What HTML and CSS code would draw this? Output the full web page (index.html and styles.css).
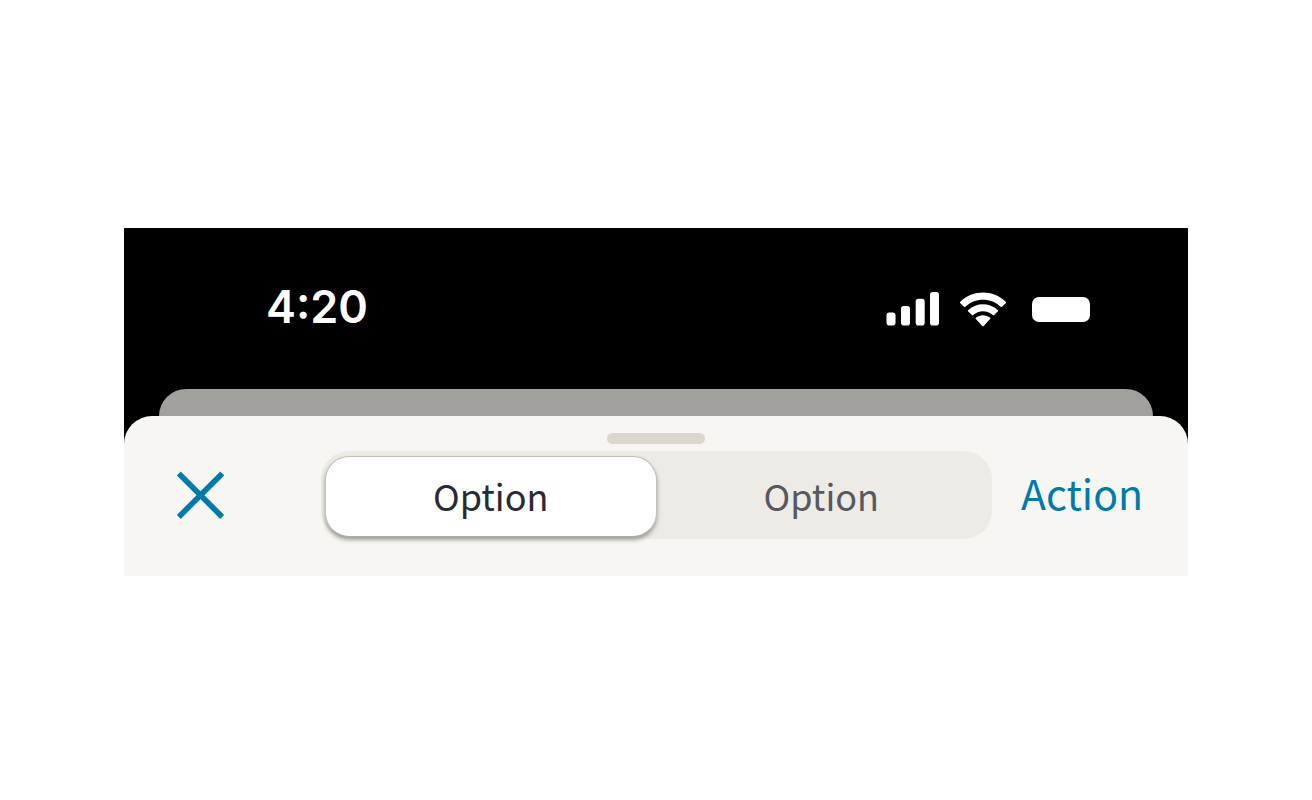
FILE: index.html
```html
<!DOCTYPE html>
<html lang="en">
<head>
    <meta charset="UTF-8">
    <meta name="viewport" content="width=device-width, initial-scale=1.0">
    <title>Modal Header</title>
    <link rel="stylesheet" href="styles.css">
</head>
<body>
    <div class="screen">
        <div class="status-bar">
            <span class="time">4:20</span>
            <div class="status-icons">
                <svg class="signal" width="54" height="34" viewBox="0 0 54 34" fill="#fff" aria-hidden="true">
                    <rect x="0.5" y="20.5" width="9" height="13" rx="2.8"/>
                    <rect x="15" y="14" width="9" height="19.5" rx="2.8"/>
                    <rect x="29.7" y="6.8" width="9" height="26.7" rx="2.8"/>
                    <rect x="44" y="0" width="9" height="33.5" rx="2.8"/>
                </svg>
                <svg class="wifi" width="48" height="35" viewBox="0 0 48 35" fill="#fff" aria-hidden="true">
                    <path d="M24 7.8c6.6 0 12.900 2.500 17.700 7 .4.400.9.400 1.300 0l3.700-3.600c.5-.5.500-1 0-1.500-12.700-12.200-32.700-12.200-45.400 0-.5.500-.5 1 0 1.500L5 14.800c.4.400.9.400 1.300 0C11.100 10.300 17.400 7.800 24 7.800z"/>
                    <path d="M24 19.300c3.600 0 7.100 1.300 9.800 3.800.4.400.9.400 1.300 0l3.700-3.600c.5-.5.500-1 0-1.400-8.400-7.900-21.200-7.900-29.600 0-.5.400-.5.900 0 1.400l3.700 3.600c.4.400.9.400 1.300 0 2.700-2.500 6.200-3.800 9.800-3.800z"/>
                    <path d="M31.100 27.100c.5-.4.500-1 0-1.400-4.100-3.400-10.100-3.400-14.200 0-.5.400-.5 1 0 1.400l6.400 6.900c.4.500 1 .5 1.400 0z"/>
                </svg>
                <span class="battery"></span>
            </div>
        </div>

        <div class="back-card"></div>

        <div class="sheet">
            <div class="grabber"></div>
            <div class="toolbar">
                <button class="close" type="button" aria-label="Close">
                    <svg width="48" height="48" viewBox="0 0 48 48" fill="none" stroke="#007aa8" stroke-width="5.6" aria-hidden="true">
                        <path d="M2.800 2.500l43.400 43.400M46.200 2.500L2.800 45.900"/>
                    </svg>
                </button>
                <div class="segmented">
                    <button class="option selected" type="button" aria-pressed="true">Option</button>
                    <button class="option" type="button" aria-pressed="false">Option</button>
                </div>
                <button class="action" type="button">Action</button>
            </div>
        </div>
    </div>
</body>
</html>
```
FILE: styles.css
```css
* {
    box-sizing: border-box;
}

body {
    margin: 0;
    padding: 228px 124px 0;
    background-color: #fff;
    font-family: "Noto Sans CJK SC", sans-serif;
}

.screen {
    background-color: #000;
}

.status-bar {
    display: flex;
    justify-content: space-between;
    align-items: center;
    padding: 57px 98px 56px 142px;
}

.time {
    padding-bottom: 4px;
    color: #fff;
    font-family: Inter, sans-serif;
    font-size: 45px;
    font-weight: 600;
    line-height: 44px;
}

.status-icons {
    display: flex;
    align-items: center;
}

.wifi {
    margin: 0 25px 0 19px;
}

.battery {
    width: 58px;
    height: 25px;
    border-radius: 7px;
    background-color: #fff;
}

.back-card {
    height: 27px;
    margin: 0 35px;
    border-radius: 27px 27px 0 0;
    background-color: #a1a09c;
}

.sheet {
    padding: 17px 0 37px;
    border-radius: 28px 28px 0 0;
    background-color: #f7f6f2;
}

.grabber {
    width: 98px;
    height: 11px;
    margin: 0 auto 7px;
    border-radius: 6px;
    background-color: #dbd7cc;
}

.toolbar {
    display: flex;
    align-items: center;
    padding: 0 45px 0 52px;
}

button {
    padding: 0;
    border: none;
    background: none;
    font-family: inherit;
    cursor: pointer;
}

.close {
    display: flex;
}

.segmented {
    display: flex;
    flex: 1;
    height: 88px;
    margin: 0 29px 0 97px;
    padding: 5px 6px 2px 4px;
    border-radius: 28px;
    background-color: #eeebe7;
}

.option {
    flex: 1;
    padding-bottom: 4px;
    border-radius: 24px;
    color: #57585e;
    font-size: 36px;
    line-height: 48px;
}

.option.selected {
    background-color: #fff;
    border: 1px solid #c4c0b6;
    border-bottom-color: #acaca4;
    color: #282a35;
    box-shadow: 0 3px 4px rgba(40, 42, 30, 0.4);
}

.action {
    padding-bottom: 6px;
    color: #007aa8;
    font-size: 41px;
    line-height: 48px;
}
```
